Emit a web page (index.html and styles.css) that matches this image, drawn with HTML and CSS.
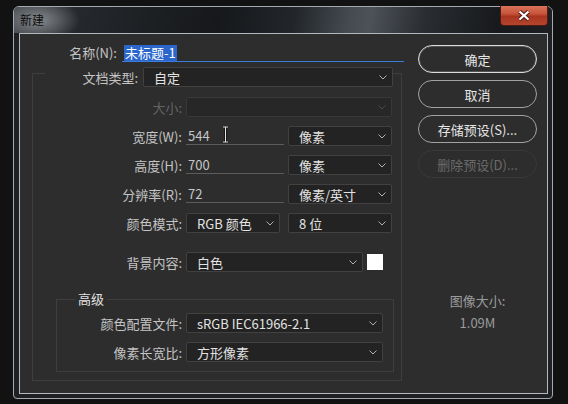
FILE: index.html
```html
<!DOCTYPE html>
<html lang="zh-CN">
<head>
<meta charset="utf-8">
<title>新建</title>
<link rel="stylesheet" href="styles.css">
</head>
<body>
<div class="window">
  <div class="titlebar">
    <span class="title">新建</span>
    <div class="close">
      <svg width="14" height="11" viewBox="0 0 14 11"><path d="M2.5 1.5 L11.5 9.5 M11.5 1.5 L2.5 9.5" stroke="#4a1812" stroke-width="4.2" fill="none"/><path d="M2.5 1.5 L11.5 9.5 M11.5 1.5 L2.5 9.5" stroke="#ffffff" stroke-width="2.3" fill="none"/></svg>
    </div>
  </div>
  <div class="client">
    <div class="main">
      <div class="name-row">
        <label class="lbl lbl-name">名称(N):</label>
        <div class="name-input"><span class="hl">未标题-1</span></div>
      </div>
      <div class="group">
        <div class="legend-row">
          <label class="lbl lbl-type">文档类型:</label>
          <div class="select sel-type"><span>自定</span><svg class="chev" width="8" height="5" viewBox="0 0 8 5"><path d="M0.5 0.5 L4 4 L7.5 0.5" fill="none" stroke="#b0b0b0"/></svg></div>
        </div>
        <div class="row row-first">
          <label class="lbl lbl-main dim">大小:</label>
          <div class="select disabled sel-size"><svg class="chev" width="8" height="5" viewBox="0 0 8 5"><path d="M0.5 0.5 L4 4 L7.5 0.5" fill="none" stroke="#4c4c4c"/></svg></div>
        </div>
        <div class="row">
          <label class="lbl lbl-main">宽度(W):</label>
          <div class="input input-w"><span>544</span>
            <svg class="ibeam" width="7" height="17" viewBox="0 0 7 17"><path d="M1 1 H6 M3.5 1 V16 M1 16 H6" stroke="#111" stroke-width="2.6" fill="none"/><path d="M1 1 H6 M3.5 1 V16 M1 16 H6" stroke="#e8e8e8" stroke-width="1" fill="none"/></svg>
          </div>
          <div class="select sel-unit"><span>像素</span><svg class="chev" width="8" height="5" viewBox="0 0 8 5"><path d="M0.5 0.5 L4 4 L7.5 0.5" fill="none" stroke="#b0b0b0"/></svg></div>
        </div>
        <div class="row">
          <label class="lbl lbl-main">高度(H):</label>
          <div class="input"><span>700</span></div>
          <div class="select sel-unit"><span>像素</span><svg class="chev" width="8" height="5" viewBox="0 0 8 5"><path d="M0.5 0.5 L4 4 L7.5 0.5" fill="none" stroke="#b0b0b0"/></svg></div>
        </div>
        <div class="row">
          <label class="lbl lbl-main">分辨率(R):</label>
          <div class="input"><span>72</span></div>
          <div class="select sel-unit"><span>像素/英寸</span><svg class="chev" width="8" height="5" viewBox="0 0 8 5"><path d="M0.5 0.5 L4 4 L7.5 0.5" fill="none" stroke="#b0b0b0"/></svg></div>
        </div>
        <div class="row">
          <label class="lbl lbl-main">颜色模式:</label>
          <div class="select sel-mode"><span>RGB 颜色</span><svg class="chev" width="8" height="5" viewBox="0 0 8 5"><path d="M0.5 0.5 L4 4 L7.5 0.5" fill="none" stroke="#b0b0b0"/></svg></div>
          <div class="select sel-bits"><span>8 位</span><svg class="chev" width="8" height="5" viewBox="0 0 8 5"><path d="M0.5 0.5 L4 4 L7.5 0.5" fill="none" stroke="#b0b0b0"/></svg></div>
        </div>
        <div class="row row-bg">
          <label class="lbl lbl-main">背景内容:</label>
          <div class="select sel-bg"><span>白色</span><svg class="chev" width="8" height="5" viewBox="0 0 8 5"><path d="M0.5 0.5 L4 4 L7.5 0.5" fill="none" stroke="#b0b0b0"/></svg></div>
          <div class="swatch"></div>
        </div>
        <div class="adv">
          <div class="adv-legend">高级</div>
          <div class="row row-adv-first">
            <label class="lbl lbl-adv">颜色配置文件:</label>
            <div class="select sel-adv"><span>sRGB IEC61966-2.1</span><svg class="chev" width="8" height="5" viewBox="0 0 8 5"><path d="M0.5 0.5 L4 4 L7.5 0.5" fill="none" stroke="#b0b0b0"/></svg></div>
          </div>
          <div class="row">
            <label class="lbl lbl-adv">像素长宽比:</label>
            <div class="select sel-adv"><span>方形像素</span><svg class="chev" width="8" height="5" viewBox="0 0 8 5"><path d="M0.5 0.5 L4 4 L7.5 0.5" fill="none" stroke="#b0b0b0"/></svg></div>
          </div>
        </div>
      </div>
    </div>
    <div class="side">
      <div class="btn btn-default">确定</div>
      <div class="btn">取消</div>
      <div class="btn">存储预设(S)...</div>
      <div class="btn btn-disabled">删除预设(D)...</div>
      <div class="info">
        <div class="info-label">图像大小:</div>
        <div class="info-value">1.09M</div>
      </div>
    </div>
  </div>
</div>
</body>
</html>
```

FILE: styles.css
```css
* { box-sizing: border-box; }
html, body { margin: 0; padding: 0; }
body {
  width: 568px;
  height: 404px;
  overflow: hidden;
  background: #121212;
  font-family: "Noto Sans CJK SC", "Noto Sans", sans-serif;
  font-size: 13px;
  padding: 6px 0 0 13px;
}
.window {
  width: 540px;
  height: 393px;
  border: 1px solid #a4aaaf;
  border-radius: 6px 6px 4px 4px;
  background: #1e2023;
  display: flex;
  flex-direction: column;
}
.titlebar {
  height: 26px;
  flex: none;
  display: flex;
  align-items: flex-start;
  border-radius: 5px 5px 0 0;
  background:
    radial-gradient(ellipse 42px 22px at 24px 13px, rgba(160,165,170,0.75), rgba(160,165,170,0) 100%),
    linear-gradient(100deg, #3e4247 0%, #25282c 12%, #16181b 38%, #22262a 52%, #454a50 62%, #4d5258 66%, #2a2d31 76%, #17191c 90%, #1d1f22 100%);
}
.title {
  padding-left: 6px;
  line-height: 26px;
  font-size: 12px;
  color: #0c0c0c;
}
.close {
  margin-left: auto;
  margin-top: -1px;
  margin-right: 4px;
  width: 48px;
  height: 20px;
  border: 1px solid #4e1c15;
  border-top: none;
  border-radius: 0 0 4px 4px;
  background: linear-gradient(#d8735c 0%, #c9543b 40%, #a93520 55%, #b4452d 100%);
  display: flex;
  align-items: center;
  justify-content: center;
  padding-bottom: 1px;
}
.client {
  flex: 1;
  margin: 0 4px 4px 5px;
  border: 1px solid #b3b9be;
  background: #2d2d2d;
  display: flex;
}
.main { width: 384px; flex: none; }
.lbl {
  color: #c4c4c4;
  text-align: right;
  flex: none;
  white-space: nowrap;
}
.lbl.dim { color: #646464; }
.name-row {
  display: flex;
  height: 18px;
  margin-top: 10px;
  line-height: 18px;
}
.lbl-name { width: 97px; }
.name-input {
  margin-left: 5px;
  width: 282px;
  height: 18px;
  border-bottom: 1px solid #3b7ddd;
  padding-left: 2px;
}
.hl {
  display: inline-block;
  vertical-align: top;
  margin-top: 1px;
  height: 16px;
  line-height: 16px;
  padding: 0 1px;
  background: #2b66cc;
  color: #ffffff;
}
.group {
  margin: 11px 0 0 12px;
  width: 370px;
  border: 1px solid #3e3e3e;
  padding-bottom: 8px;
  display: flex;
  flex-direction: column;
}
.legend-row {
  display: flex;
  align-items: center;
  height: 20px;
  margin: -7px 0 0 12px;
  align-self: flex-start;
  background: #2d2d2d;
}
.lbl-type { width: 93px; }
.select {
  height: 20px;
  background: #232323;
  border: 1px solid #414141;
  border-radius: 2px;
  display: flex;
  align-items: center;
  padding-left: 10px;
  color: #e2e2e2;
  white-space: nowrap;
  flex: none;
}
.select .chev { margin-left: auto; margin-right: 5px; flex: none; }
.select.disabled { background: #272727; border-color: #383838; }
.sel-type { margin-left: 5px; width: 250px; }
.row {
  display: flex;
  align-items: center;
  height: 20px;
  margin-top: 9px;
}
.row-first { margin-top: 10px; }
.lbl-main { width: 149px; }
.sel-size { margin-left: 4px; width: 206px; }
.input {
  position: relative;
  margin-left: 4px;
  width: 98px;
  height: 19px;
  align-self: flex-start;
  border-bottom: 1px solid #5c5c5c;
  padding: 2px 0 0 2px;
  line-height: 16px;
  color: #c6c6c6;
  flex: none;
}
.ibeam { position: absolute; left: 36px; top: 0; }
.sel-unit { margin-left: 4px; width: 104px; }
.sel-mode { margin-left: 4px; width: 94px; }
.sel-bits { margin-left: 8px; width: 104px; }
.row-bg { margin-top: 19px; }
.sel-bg { margin-left: 4px; width: 177px; }
.swatch {
  margin-left: 4px;
  width: 16px;
  height: 16px;
  background: #ffffff;
  flex: none;
}
.adv {
  margin: 27px 0 0 23px;
  width: 338px;
  border: 1px solid #3e3e3e;
  padding-bottom: 9px;
  display: flex;
  flex-direction: column;
}
.adv-legend {
  margin: -9px 0 0 18px;
  padding: 0 3px;
  height: 16px;
  line-height: 16px;
  align-self: flex-start;
  background: #2d2d2d;
  color: #e0e0e0;
}
.row-adv-first { margin-top: 6px; }
.lbl-adv { width: 125px; }
.sel-adv { margin-left: 4px; width: 197px; }
.side {
  margin-left: 14px;
  padding-top: 11px;
  width: 119px;
  flex: none;
  display: flex;
  flex-direction: column;
  gap: 7px;
}
.btn {
  height: 28px;
  border: 1px solid #a2a2a2;
  border-radius: 14px;
  display: flex;
  align-items: center;
  justify-content: center;
  color: #e6e6e6;
  white-space: nowrap;
}
.btn-default {
  border-color: #dcdcdc;
  box-shadow: inset 0 0 0 1px rgba(255,255,255,0.18);
}
.btn-disabled {
  border-color: #393939;
  color: #6a6a6a;
}
.info {
  margin-top: 106px;
  text-align: center;
  color: #9b9b9b;
  line-height: 20px;
}
.info-value { margin-top: 2px; }
```
